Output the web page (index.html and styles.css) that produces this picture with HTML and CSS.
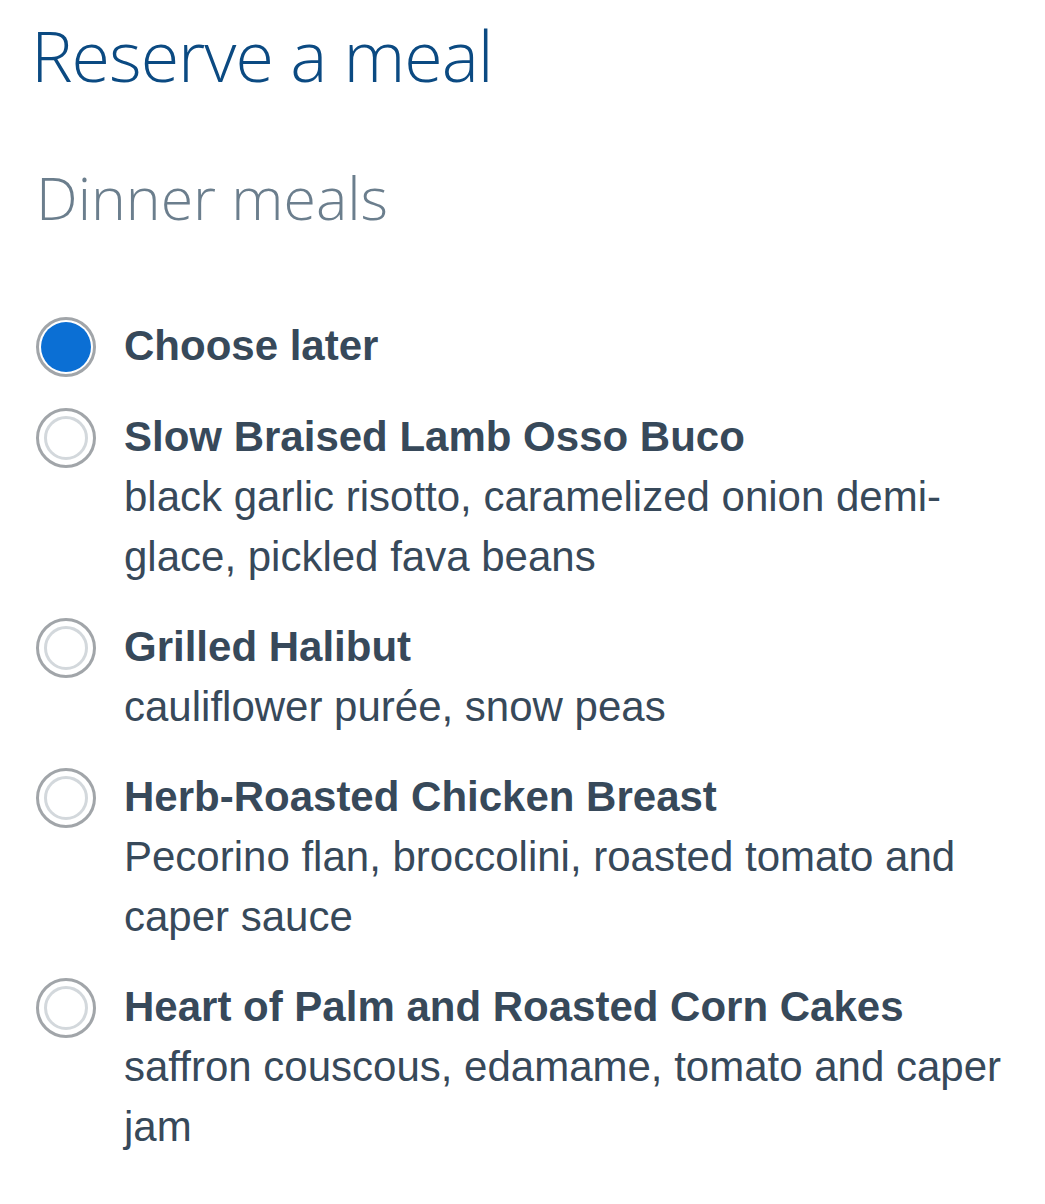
FILE: index.html
```html
<!DOCTYPE html>
<html>
	<head>
		<meta charset="UTF-8">
		<title>Reserve a meal</title>
		<link rel="stylesheet" href="styles.css">
	</head>
	<body>
		<div class="page">
			<h1 class="title">Reserve a meal</h1>
			<h2 class="sub">Dinner meals</h2>
			<ul class="meals">
				<li class="on">
					<i></i>
					<div class="txt">
						<strong>Choose later</strong>
					</div>
				</li>
				<li>
					<i></i>
					<div class="txt">
						<strong>Slow Braised Lamb Osso Buco</strong>
						<span>black garlic risotto, caramelized onion demi-glace, pickled fava beans</span>
					</div>
				</li>
				<li>
					<i></i>
					<div class="txt">
						<strong>Grilled Halibut</strong>
						<span>cauliflower purée, snow peas</span>
					</div>
				</li>
				<li>
					<i></i>
					<div class="txt">
						<strong>Herb-Roasted Chicken Breast</strong>
						<span>Pecorino flan, broccolini, roasted tomato and caper sauce</span>
					</div>
				</li>
				<li>
					<i></i>
					<div class="txt">
						<strong>Heart of Palm and Roasted Corn Cakes</strong>
						<span>saffron couscous, edamame, tomato and caper jam</span>
					</div>
				</li>
			</ul>
		</div>
	</body>
</html>
```

FILE: styles.css
```css
body{
	margin: 0;
	background: #fff;
}
ul,li{
	margin: 0;
	padding: 0;
	list-style: none;
}
.page{
	padding: 10px 30px 0 31px;
}
.title{
	margin: 0;
	font: 300 70px/90px "Open Sans", sans-serif;
	color: #0b4a82;
	letter-spacing: -1px;
}
.sub{
	margin: 57px 0 0 5px;
	font: 300 59px/80px "Open Sans", sans-serif;
	color: #6b7e8d;
}
.meals{
	margin-top: 79px;
}
.meals li{
	display: flex;
	gap: 28px;
	margin-bottom: 30px;
}
.meals i{
	flex: none;
	width: 60px;
	height: 60px;
	box-sizing: border-box;
	border: 3px solid #a1a5a9;
	border-radius: 50%;
	margin: 1px 0 0 5px;
	padding: 5px;
	display: flex;
}
.meals i::after{
	content: "";
	flex: 1;
	border: 3px solid #d3d8dc;
	border-radius: 50%;
}
.meals li.on i::after{
	border: none;
	background: #0b6fd4;
	margin: -3px;
}
.txt{
	font: 42px/60px "Liberation Sans", Arial, sans-serif;
	color: #37495a;
}
.txt strong{
	display: block;
	font-weight: bold;
}
.txt span{
	display: block;
}
```
